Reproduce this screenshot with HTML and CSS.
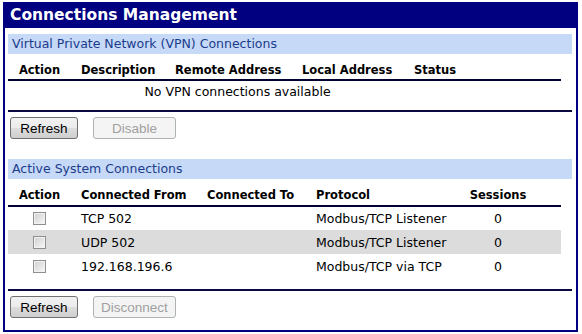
FILE: index.html
```html
<!DOCTYPE html>
<html lang="en">

<head>
    <meta charset="UTF-8">
    <meta name="viewport" content="width=device-width, initial-scale=1.0">
    <title>Connections Management</title>
    <link rel="stylesheet" href="styles.css">
</head>

<body>

    <!-- connections panel -->

    <div class="panel">
        <div class="panel-title">Connections Management</div>
        <div class="panel-body">

            <!-- vpn connections -->

            <div class="section-bar">Virtual Private Network (VPN) Connections</div>
            <table class="grid">
                <colgroup>
                    <col style="width: 63px">
                    <col style="width: 94px">
                    <col style="width: 127px">
                    <col style="width: 112px">
                    <col>
                </colgroup>
                <thead>
                    <tr>
                        <th class="center">Action</th>
                        <th>Description</th>
                        <th>Remote Address</th>
                        <th>Local Address</th>
                        <th>Status</th>
                    </tr>
                </thead>
                <tbody>
                    <tr>
                        <td></td>
                        <td colspan="3" class="center">No VPN connections available</td>
                        <td></td>
                    </tr>
                </tbody>
            </table>
            <div class="divider vpn"></div>
            <div class="buttons">
                <button>Refresh</button>
                <button disabled>Disable</button>
            </div>

            <!-- system connections -->

            <div class="section-bar">Active System Connections</div>
            <table class="grid rows">
                <colgroup>
                    <col style="width: 63px">
                    <col style="width: 126px">
                    <col style="width: 109px">
                    <col style="width: 153px">
                    <col>
                </colgroup>
                <thead>
                    <tr>
                        <th class="center">Action</th>
                        <th>Connected From</th>
                        <th>Connected To</th>
                        <th>Protocol</th>
                        <th class="sessions">Sessions</th>
                    </tr>
                </thead>
                <tbody>
                    <tr>
                        <td class="center"><input type="checkbox"></td>
                        <td>TCP 502</td>
                        <td></td>
                        <td>Modbus/TCP Listener</td>
                        <td class="sessions">0</td>
                    </tr>
                    <tr class="alt">
                        <td class="center"><input type="checkbox"></td>
                        <td>UDP 502</td>
                        <td></td>
                        <td>Modbus/TCP Listener</td>
                        <td class="sessions">0</td>
                    </tr>
                    <tr>
                        <td class="center"><input type="checkbox"></td>
                        <td>192.168.196.6</td>
                        <td></td>
                        <td>Modbus/TCP via TCP</td>
                        <td class="sessions">0</td>
                    </tr>
                </tbody>
            </table>
            <div class="divider system"></div>
            <div class="buttons last">
                <button>Refresh</button>
                <button disabled>Disconnect</button>
            </div>

        </div>
    </div>

</body>

</html>
```

FILE: styles.css
```css
* {
    margin: 0;
    padding: 0;
    box-sizing: border-box;
}

body {
    background-color: #fff;
    font-family: "DejaVu Sans", Verdana, sans-serif;
    font-size: 12.5px;
    color: #000;
    padding: 2px 4px 0 3px;
}

.panel {
    width: 575px;
    border: 2px solid #000080;
    border-top: none;
}

.panel-title {
    background-color: #000080;
    color: #fff;
    font-size: 15.5px;
    font-weight: bold;
    height: 26px;
    line-height: 26px;
    padding-left: 5px;
}

.panel-body {
    padding: 6px 4px 0 3px;
}

.section-bar {
    background-color: #c6d9f7;
    color: #1b3c8c;
    height: 20px;
    line-height: 20px;
    padding-left: 4px;
}

.grid {
    width: 553px;
    border-collapse: collapse;
    table-layout: fixed;
}

.grid th {
    text-align: left;
    font-size: 11.5px;
    font-weight: bold;
    white-space: nowrap;
    padding: 9px 10px 2px;
    line-height: 14px;
    border-bottom: 2px solid #000033;
}

.grid.rows th {
    padding-bottom: 3px;
}

.grid td {
    height: 22px;
    padding: 0 10px;
    white-space: nowrap;
    vertical-align: middle;
}

.grid.rows td {
    height: 24px;
}

.grid .center {
    text-align: center;
}

.grid .sessions {
    text-align: center;
    padding-right: 34px;
}

.grid tr.alt td {
    background-color: #dcdcdc;
}

.grid input[type="checkbox"] {
    appearance: none;
    display: block;
    margin: 0 auto;
    width: 13px;
    height: 13px;
    border: 1px solid #8f8f8f;
    background: linear-gradient(135deg, #cfcfcf, #f8f8f8);
    box-shadow: inset 0 0 0 1px #f2f2f2;
}

.divider {
    height: 2px;
    background-color: #0a0a40;
}

.divider.vpn {
    margin-top: 8px;
}

.divider.system {
    margin-top: 11px;
}

.buttons {
    display: flex;
    gap: 15px;
    padding: 5px 0 20px 2px;
}

.buttons.last {
    padding-bottom: 12px;
}

.buttons button {
    width: 68px;
    height: 22px;
    font-family: "Liberation Sans", Arial, sans-serif;
    font-size: 13.5px;
    color: #000;
    border: 1px solid #707070;
    border-radius: 3px;
    background: linear-gradient(#f2f2f2, #ebebeb 50%, #dddddd 51%, #cfcfcf);
}

.buttons button:disabled {
    color: #a0a0a0;
    border-color: #adb2b5;
    background: #f4f4f4;
}

.buttons button:last-child:disabled {
    width: 83px;
}
```
